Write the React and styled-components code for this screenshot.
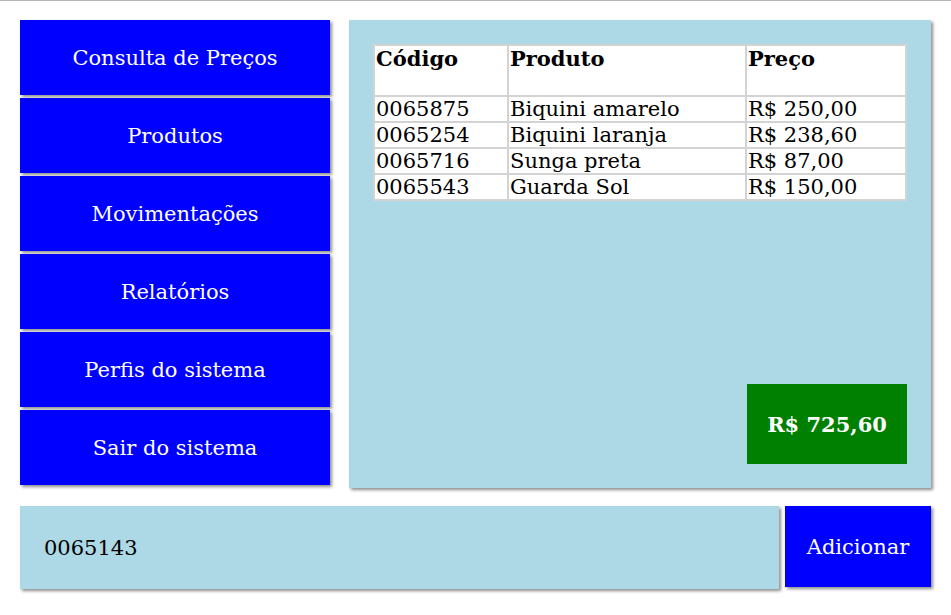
import React from "react";
import styled, { createGlobalStyle } from "styled-components";

const Global = createGlobalStyle`
  html, body { margin: 0; padding: 0; background: #fff; }
  body { font-family: "DejaVu Serif", "Liberation Serif", serif; border-top: 1px solid #b5b5b5; box-sizing: border-box; height: 615px; overflow: hidden; }
  * { box-sizing: border-box; }
`;

const Page = styled.div`
  padding: 19px 20px 20px 20px;
  display: flex;
  flex-direction: column;
  gap: 18px;
`;

const Top = styled.div`
  display: flex;
  gap: 19px;
  align-items: flex-start;
`;

const Menu = styled.nav`
  width: 310px;
  display: flex;
  flex-direction: column;
  gap: 3px;
`;

const MenuButton = styled.button`
  height: 75px;
  width: 100%;
  border: none;
  background: #0000ff;
  color: #fff;
  font-family: inherit;
  font-size: 21px;
  box-shadow: 2px 2px 3px rgba(0, 0, 0, 0.45);
  cursor: pointer;
`;

const Panel = styled.section`
  flex: 1;
  height: 468px;
  background: #add8e6;
  padding: 24px;
  display: flex;
  flex-direction: column;
  justify-content: space-between;
  box-shadow: 2px 2px 3px rgba(0, 0, 0, 0.45);
`;

const Table = styled.table`
  width: 100%;
  border-collapse: collapse;
  background: #fff;
  border: 2px solid #d3d3d3;
  font-size: 21px;
  color: #000;
`;

const Th = styled.th`
  text-align: left;
  vertical-align: top;
  height: 51px;
  padding: 0 1px;
  border: 2px solid #d3d3d3;
  font-weight: bold;
  line-height: 26px;
  width: ${(p) => p.$w || "auto"};
`;

const Td = styled.td`
  padding: 0 1px;
  border: 2px solid #d3d3d3;
  line-height: 22px;
  height: 26px;
`;

const Total = styled.div`
  align-self: flex-end;
  width: 160px;
  height: 80px;
  background: #008000;
  color: #fff;
  font-weight: bold;
  font-size: 21px;
  display: flex;
  align-items: center;
  justify-content: center;
`;

const Bottom = styled.div`
  display: flex;
  gap: 6px;
  align-items: flex-start;
`;

const Input = styled.input`
  width: 759px;
  height: 83px;
  border: none;
  background: #add8e6;
  padding: 0 24px;
  font-family: inherit;
  font-size: 21px;
  color: #000;
  box-shadow: 2px 2px 3px rgba(0, 0, 0, 0.45);
  outline: none;
`;

const AddButton = styled.button`
  width: 146px;
  height: 81px;
  border: none;
  background: #0000ff;
  color: #fff;
  font-family: inherit;
  font-size: 21px;
  box-shadow: 2px 2px 3px rgba(0, 0, 0, 0.45);
`;

const menu = [
  "Consulta de Preços",
  "Produtos",
  "Movimentações",
  "Relatórios",
  "Perfis do sistema",
  "Sair do sistema",
];

const rows = [
  ["0065875", "Biquini amarelo", "R$ 250,00"],
  ["0065254", "Biquini laranja", "R$ 238,60"],
  ["0065716", "Sunga preta", "R$ 87,00"],
  ["0065543", "Guarda Sol", "R$ 150,00"],
];

export default function App() {
  return (
    <>
      <Global />
      <Page>
        <Top>
          <Menu>
            {menu.map((m) => (
              <MenuButton key={m}>{m}</MenuButton>
            ))}
          </Menu>
          <Panel>
            <Table>
              <thead>
                <tr>
                  <Th $w="134px">Código</Th>
                  <Th $w="238px">Produto</Th>
                  <Th>Preço</Th>
                </tr>
              </thead>
              <tbody>
                {rows.map((r) => (
                  <tr key={r[0]}>
                    {r.map((c, i) => (
                      <Td key={i}>{c}</Td>
                    ))}
                  </tr>
                ))}
              </tbody>
            </Table>
            <Total>R$ 725,60</Total>
          </Panel>
        </Top>
        <Bottom>
          <Input defaultValue="0065143" />
          <AddButton>Adicionar</AddButton>
        </Bottom>
      </Page>
    </>
  );
}
